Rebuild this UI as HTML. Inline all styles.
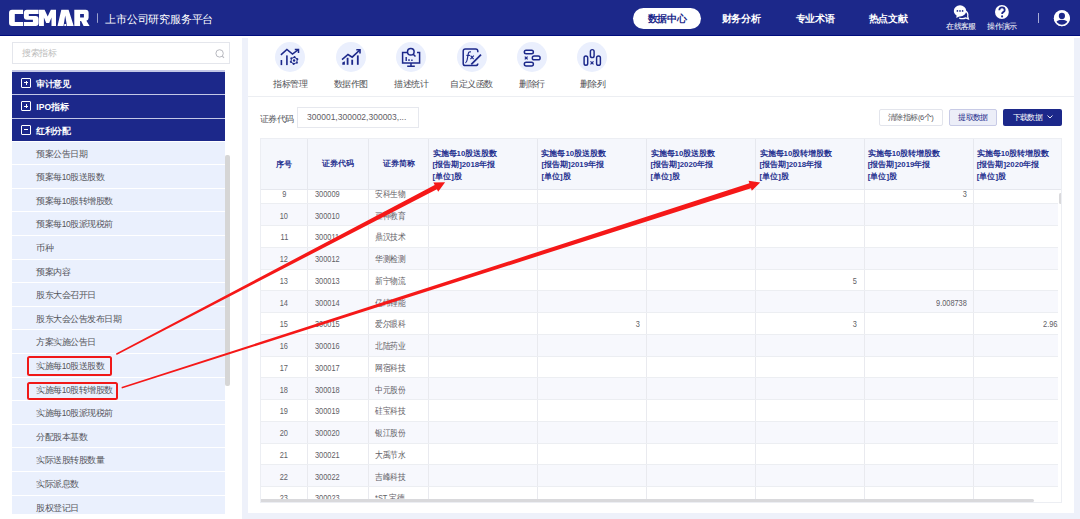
<!DOCTYPE html>
<html><head><meta charset="utf-8">
<style>
*{margin:0;padding:0;box-sizing:border-box}
html,body{width:1080px;height:519px;overflow:hidden;background:#fff;font-family:"Liberation Sans",sans-serif;position:relative}

.abs{position:absolute}
#hdr{left:0;top:0;width:1080px;height:36px;background:#1c288a;border-bottom:1px solid #000c7d}
.nav{position:absolute;top:8px;height:21px;line-height:21px;font-size:10px;letter-spacing:-0.3px;font-weight:bold;color:#fff;text-align:center;white-space:nowrap}
.nav.on{background:#fff;color:#1c288a;border-radius:11px}
.hico-t{position:absolute;top:22px;font-size:7.5px;letter-spacing:-0.6px;color:#fff;white-space:nowrap;width:40px;text-align:center}
.strip{position:absolute;background:#eef1fa}
#search{left:12px;top:42px;width:218px;height:22px;border:1px solid #e4e6ec;background:#fff}
#search span{position:absolute;left:9px;top:-0.5px;line-height:21px;font-size:8.5px;letter-spacing:-0.5px;color:#bdbdbd}
.mh{position:absolute;left:12px;width:213px;height:22.4px;background:#1c288a;color:#fff;font-size:8.5px;letter-spacing:-0.5px;font-weight:bold;line-height:22px;padding-top:1.2px;padding-left:24.2px;white-space:nowrap}
.mh i{position:absolute;left:9px;top:6px;width:10px;height:10px;border:1px solid #fff;border-radius:1px}
.mh i:before{content:"";position:absolute;left:2px;top:3.5px;width:4px;height:1px;background:#fff}
.mh i.p:after{content:"";position:absolute;left:3.5px;top:2px;width:1px;height:4px;background:#fff}
#sub{position:absolute;left:12px;top:141.6px;width:213px;height:372px;overflow:hidden}
.si{height:23.6px;background:#eaf0fd;border-bottom:1px solid #fff;font-size:8.5px;letter-spacing:-0.5px;color:#55565c;line-height:22.6px;padding-top:1px;padding-left:24.2px;white-space:nowrap}

#panel{left:248px;top:38px;width:826px;height:475px;background:#fff}
.tb{position:absolute;top:42px;width:30px;height:30px;border-radius:50%;background:#eaeffd}
.tb svg{position:absolute;left:0;top:0}
.tbl{position:absolute;top:78px;width:70px;text-align:center;font-size:8.5px;letter-spacing:-0.5px;color:#505156;white-space:nowrap;line-height:12px}
#sep{left:248px;top:96px;width:826px;height:1px;background:#eceef2}
.btn{position:absolute;top:108.5px;height:17px;line-height:15px;font-size:7.5px;letter-spacing:-0.7px;text-align:center;border-radius:2px;white-space:nowrap}
#tbl{left:260px;top:138px;width:802px;height:365px;border:1px solid #eceef3;border-top:none;overflow:hidden}
#thead{position:absolute;left:0;top:0;width:802px;height:51.5px;background:#f5f7fc;border-top:1px solid #eceef3;border-bottom:1px solid #e6e8ee;z-index:2}
.th{position:absolute;top:0;height:50.5px;border-right:1px solid #e6e8ee;font-size:7.8px;font-weight:bold;color:#25308f;white-space:nowrap}
.th.s{line-height:50px;padding-top:1.4px;text-align:center}
.th.m{padding:8.5px 0 0 3.2px;line-height:11.75px}
#tbody{position:absolute;left:0;top:51.5px;width:797.4px;height:309.8px;overflow:hidden}
#rows{position:absolute;left:0;top:-7px;width:900px}
.tr{position:relative;height:21.75px;border-bottom:1px solid #eceef2;background:#fff}
.tr.e{background:#f7f8fd}
.td{position:absolute;top:0;height:20.75px;line-height:20.75px;padding-top:1.4px;border-right:1px solid #e9eaef;font-size:8.6px;color:#5f6066;white-space:nowrap;overflow:hidden}
.c0{left:0;width:47.2px;text-align:center}
.c1{left:47.2px;width:61.1px;padding-left:6.8px}
.c2{left:108.3px;width:60.1px;padding-left:6.2px}
.c3{left:168.4px;width:108.9px;text-align:right;padding-right:7px}
.c4{left:277.3px;width:109.1px;text-align:right;padding-right:7px}
.c5{left:386.4px;width:109px;text-align:right;padding-right:7px}
.c6{left:495.4px;width:108.2px;text-align:right;padding-right:7px}
.c7{left:603.6px;width:109px;text-align:right;padding-right:6px}
.c8{left:712.6px;width:109px;text-align:right;padding-right:7.6px}
#hsb{position:absolute;left:0;top:360.9px;width:802px;height:3.6px;background:#fff}
#hsb i{position:absolute;left:0;top:0;width:773px;height:3.6px;background:#d9d9dc;border-radius:0 2px 2px 0}
#vsb{position:absolute;left:797.4px;top:51.5px;width:4.6px;height:310px;background:#fff}
#vsb i{position:absolute;left:0.8px;top:3px;width:3.3px;height:11.5px;background:#d9d9dc;border-radius:2px}

.tL,.tR,.tC{display:inline-block;transform:scaleX(0.86)}
.tL{transform-origin:0 50%}.tR{transform-origin:100% 50%}.tC{transform-origin:50% 50%}
</style></head><body>
<div id="hdr" class="abs">
  <svg class="abs" style="left:0;top:0" width="230" height="36">
    <path fill="#fff" fill-rule="evenodd" d="M23.1 9.8 L12.05 9.8 Q9.05 9.8 9.05 12.8 L9.05 22.9 Q9.05 25.9 12.05 25.9 L23.1 25.9 L23.1 22.05 L14.8 22.05 L14.8 13.9 L23.1 13.9 Z
M26.9 9.8 L38.6 9.8 L38.6 13.9 L28.8 13.9 L28.8 15.9 L35.6 15.9 Q38.6 15.9 38.6 18.9 L38.6 22.9 Q38.6 25.9 35.6 25.9 L23.9 25.9 L23.9 22.05 L32.9 22.05 L32.9 19.8 L26.9 19.8 Q23.9 19.8 23.9 16.8 L23.9 12.8 Q23.9 9.8 26.9 9.8 Z
M39 25.9 L39 9.8 L44.6 9.8 L47.7 16.6 L50.8 9.8 L56 9.8 L56 25.9 L51.5 25.9 L51.5 17.6 L49.2 23 L46.2 23 L43.9 17.6 L43.9 25.9 Z
M57.5 25.9 L61.3 9.8 L68.6 9.8 L73.7 25.9 L67 25.9 L65.2 15.4 L63.5 25.9 Z M64.4 24.1 L66.1 24.1 L66.3 25.9 L64.2 25.9 Z
M74.3 25.9 L74.3 9.8 L85.6 9.8 Q88.6 9.8 88.6 12.8 L88.6 17.8 Q88.6 20.2 86.4 20.8 L89.6 25.9 L83.6 25.9 L81.1 20.9 L80.1 20.9 L80.1 25.9 Z M80.1 14 L83.9 14 L83.9 17.6 L80.1 17.6 Z"/>
    <rect x="97" y="13.3" width="1" height="9.5" fill="#9aa0cc"/>
  </svg>
  <div class="abs" style="left:105.3px;top:11.6px;font-size:11.2px;line-height:14px;color:#fff;white-space:nowrap;letter-spacing:-0.2px">上市公司研究服务平台</div>
  <div class="nav on" style="left:633px;width:68px">数据中心</div>
  <div class="nav" style="left:711px;width:60px">财务分析</div>
  <div class="nav" style="left:785px;width:60px">专业术语</div>
  <div class="nav" style="left:858px;width:60px">热点文献</div>
<svg class="abs" style="left:945px;top:3px" width="80" height="20">
 <path d="M20 7.6 Q23.6 9.6 22.7 13.4 L23.4 15.9 L20.7 14.9 Q18 16.4 14.2 15.2" stroke="#fff" stroke-width="1.25" fill="none"/>
 <ellipse cx="15" cy="7.9" rx="6.2" ry="5.6" fill="#fff"/><path d="M11.6 12 L11.4 15 L15 13 Z" fill="#fff"/>
 <circle cx="12.4" cy="7.9" r="0.85" fill="#1c288a"/><circle cx="15" cy="7.9" r="0.85" fill="#1c288a"/><circle cx="17.6" cy="7.9" r="0.85" fill="#1c288a"/>
 <circle cx="56.9" cy="9" r="6.9" fill="#fff"/>
 <path d="M54.3 7.3 Q54.3 4.4 57 4.4 Q59.7 4.4 59.7 6.9 Q59.7 8.3 58.2 9.1 Q57.1 9.7 57.1 10.9" stroke="#1c288a" stroke-width="1.8" fill="none"/>
 <circle cx="57.1" cy="13.4" r="1.05" fill="#1c288a"/>
</svg>
<div class="hico-t" style="left:941px">在线客服</div>
<div class="hico-t" style="left:982px">操作演示</div>
<div class="abs" style="left:1037.5px;top:13px;width:1px;height:10px;background:#a7acd6"></div>
<svg class="abs" style="left:1052px;top:9px" width="20" height="20">
 <circle cx="9.9" cy="9.25" r="8.1" fill="#fff"/>
 <circle cx="9.9" cy="6.9" r="3.1" fill="#1c288a"/>
 <path d="M3.6 14.2 Q4.6 10.7 9.9 10.7 Q15.2 10.7 16.2 14.2 Q13.6 16.3 9.9 16.3 Q6.2 16.3 3.6 14.2 Z" fill="#1c288a"/>
 <circle cx="9.9" cy="9.25" r="7.2" fill="none" stroke="#fff" stroke-width="1.5"/>
</svg>

</div>
<div class="strip" style="left:242px;top:38px;width:6px;height:481px"></div>
<div class="strip" style="left:242px;top:513px;width:838px;height:6px"></div>
<div class="strip" style="left:1074px;top:38px;width:6px;height:481px"></div>


<div id="panel" class="abs"></div>
<div id="sep" class="abs"></div>
<div class="tb" style="left:275.2px"><svg width="30" height="30"><path d="M5.9 12.9 L11.9 7.4 L17.5 12 L23.3 7.6" stroke="#1c288a" stroke-width="1.5" fill="none" stroke-linejoin="miter"/><path d="M19.8 7.4 L23.5 7.4 L23.5 11.1" stroke="#1c288a" stroke-width="1.5" fill="none"/>
<rect x="5.6" y="18" width="1.6" height="5.1" fill="#1c288a"/><rect x="11.1" y="13.4" width="1.6" height="9.7" fill="#1c288a"/>
<polygon points="19.10,14.00 20.26,14.15 20.80,15.56 21.50,16.10 23.00,16.25 23.45,17.34 22.50,18.50 22.38,19.38 23.00,20.75 22.28,21.68 20.80,21.44 19.98,21.78 19.10,23.00 17.94,22.85 17.40,21.44 16.70,20.90 15.20,20.75 14.75,19.66 15.70,18.50 15.82,17.62 15.20,16.25 15.92,15.32 17.40,15.56 18.22,15.22" fill="#1c288a"/><circle cx="19.1" cy="18.5" r="2.5" fill="#eaeffd"/><circle cx="19.1" cy="18.5" r="1.2" fill="#1c288a"/></svg></div>
<div class="tb" style="left:335.6px"><svg width="30" height="30"><path d="M6 17.6 L12 12.5 L16.2 15.2 L23.8 8" stroke="#1c288a" stroke-width="1.6" fill="none"/><path d="M20.3 7.8 L24 7.8 L24 11.5" stroke="#1c288a" stroke-width="1.6" fill="none"/>
<path d="M6.3 22.8 L6.3 20.6 L8.9 19.2 L8.9 22.8 Z" fill="#1c288a"/><rect x="10.7" y="15.8" width="1.8" height="7" fill="#1c288a"/><rect x="15.3" y="17.7" width="1.8" height="5.1" fill="#1c288a"/><rect x="20.9" y="13.4" width="1.8" height="9.4" fill="#1c288a"/></svg></div>
<div class="tb" style="left:396px"><svg width="30" height="30"><path d="M11 10.5 L6.6 10.5 L6.6 21 L23.6 21 L23.6 10.5 L21 10.5" stroke="#1c288a" stroke-width="1.5" fill="none"/><path d="M15 21 L15 24 M11.2 24.2 L18.8 24.2" stroke="#1c288a" stroke-width="1.5" fill="none"/>
<circle cx="14.8" cy="9.8" r="3.3" stroke="#1c288a" stroke-width="1.5" fill="none"/><path d="M17.2 12.2 L19.5 14.6" stroke="#1c288a" stroke-width="1.5"/>
<rect x="9.5" y="15" width="1.4" height="4" fill="#1c288a"/><rect x="12.3" y="17.2" width="1.4" height="1.8" fill="#1c288a"/><rect x="15.2" y="17.5" width="1.4" height="1.5" fill="#1c288a"/></svg></div>
<div class="tb" style="left:456.5px"><svg width="30" height="30"><path d="M20.8 21.4 Q20.8 23.6 18.6 23.6 L8.4 23.6 Q6.2 23.6 6.2 21.4 L6.2 9.1 Q6.2 6.9 8.4 6.9 L18.6 6.9 Q20.8 6.9 20.8 9.1 L20.8 10.2" stroke="#1c288a" stroke-width="1.5" fill="none"/>
<path d="M8.3 20.6 Q9.6 20.8 10.1 18 L11.3 11.6 Q11.8 9.4 13.9 9.9" stroke="#1c288a" stroke-width="1.2" fill="none"/><path d="M9.4 13.4 L13 13.4" stroke="#1c288a" stroke-width="1.1"/>
<path d="M13.6 13.6 L16.6 17.2 M16.8 13.6 L13.4 17.2" stroke="#1c288a" stroke-width="1.1"/><path d="M14.3 22.3 L24 12.6" stroke="#1c288a" stroke-width="1.7"/></svg></div>
<div class="tb" style="left:517px"><svg width="30" height="30"><rect x="7.3" y="8.2" width="9.1" height="3.6" rx="1.8" stroke="#1c288a" stroke-width="1.45" fill="none"/><rect x="15.3" y="14" width="7.8" height="3.8" rx="1.9" stroke="#1c288a" stroke-width="1.45" fill="none"/><rect x="7.3" y="20.2" width="9.1" height="3.8" rx="1.9" stroke="#1c288a" stroke-width="1.45" fill="none"/>
<path d="M7.8 14.6 L10.6 17.4 M10.6 14.6 L7.8 17.4" stroke="#1c288a" stroke-width="1.2"/></svg></div>
<div class="tb" style="left:577.4px"><svg width="30" height="30"><rect x="7.1" y="13.9" width="3.6" height="9.4" rx="1.8" stroke="#1c288a" stroke-width="1.45" fill="none"/><rect x="13.4" y="7.6" width="3.7" height="8" rx="1.85" stroke="#1c288a" stroke-width="1.45" fill="none"/><rect x="19.6" y="13.9" width="3.8" height="9.4" rx="1.9" stroke="#1c288a" stroke-width="1.45" fill="none"/>
<path d="M13.5 19.3 L16.5 22.3 M16.5 19.3 L13.5 22.3" stroke="#1c288a" stroke-width="1.2"/></svg></div>
<div class="tbl" style="left:255.2px">指标管理</div>
<div class="tbl" style="left:315.6px">数据作图</div>
<div class="tbl" style="left:376px">描述统计</div>
<div class="tbl" style="left:436.5px">自定义函数</div>
<div class="tbl" style="left:497px">删除行</div>
<div class="tbl" style="left:557.4px">删除列</div>
<div class="abs" style="left:260px;top:112.5px;font-size:8.5px;letter-spacing:-0.6px;color:#55565c;line-height:12px;white-space:nowrap">证券代码</div>
<div class="abs" style="left:296.5px;top:106.5px;width:122.5px;height:21px;border:1px solid #e6e8ee;font-size:8.5px;color:#5f6066;line-height:19px;padding-left:9.5px;white-space:nowrap">300001,300002,300003,...</div>
<div class="btn" style="left:878.5px;width:64px;border:1px solid #e3e5ec;color:#55565c;background:#fff;letter-spacing:-0.45px">清除指标(6个)</div>
<div class="btn" style="left:949px;width:48.2px;border:1px solid #c8cbe6;color:#1c288a;background:#eceef8">提取数据</div>
<div class="btn" style="left:1003.3px;width:58.5px;background:#1c288a;color:#fff;line-height:17px;text-align:left;padding-left:9.5px">下载数据<svg style="position:absolute;left:44px;top:6px" width="6" height="4"><path d="M0.5 0.5 L3 3 L5.5 0.5" stroke="#fff" stroke-width="0.9" fill="none"/></svg></div>
<div id="tbl" class="abs">
 <div id="tbody"><div id="rows">
<div class="tr"><div class="td c0"><span class="tC">9</span></div><div class="td c1"><span class="tL">300009</span></div><div class="td c2"><span class="tL">安科生物</span></div><div class="td c3"></div><div class="td c4"></div><div class="td c5"></div><div class="td c6"></div><div class="td c7"><span class="tR">3</span></div><div class="td c8"></div></div>
<div class="tr e"><div class="td c0"><span class="tC">10</span></div><div class="td c1"><span class="tL">300010</span></div><div class="td c2"><span class="tL">豆神教育</span></div><div class="td c3"></div><div class="td c4"></div><div class="td c5"></div><div class="td c6"></div><div class="td c7"></div><div class="td c8"></div></div>
<div class="tr"><div class="td c0"><span class="tC">11</span></div><div class="td c1"><span class="tL">300011</span></div><div class="td c2"><span class="tL">鼎汉技术</span></div><div class="td c3"></div><div class="td c4"></div><div class="td c5"></div><div class="td c6"></div><div class="td c7"></div><div class="td c8"></div></div>
<div class="tr e"><div class="td c0"><span class="tC">12</span></div><div class="td c1"><span class="tL">300012</span></div><div class="td c2"><span class="tL">华测检测</span></div><div class="td c3"></div><div class="td c4"></div><div class="td c5"></div><div class="td c6"></div><div class="td c7"></div><div class="td c8"></div></div>
<div class="tr"><div class="td c0"><span class="tC">13</span></div><div class="td c1"><span class="tL">300013</span></div><div class="td c2"><span class="tL">新宁物流</span></div><div class="td c3"></div><div class="td c4"></div><div class="td c5"></div><div class="td c6"><span class="tR">5</span></div><div class="td c7"></div><div class="td c8"></div></div>
<div class="tr e"><div class="td c0"><span class="tC">14</span></div><div class="td c1"><span class="tL">300014</span></div><div class="td c2"><span class="tL">亿纬锂能</span></div><div class="td c3"></div><div class="td c4"></div><div class="td c5"></div><div class="td c6"></div><div class="td c7"><span class="tR">9.008738</span></div><div class="td c8"></div></div>
<div class="tr"><div class="td c0"><span class="tC">15</span></div><div class="td c1"><span class="tL">300015</span></div><div class="td c2"><span class="tL">爱尔眼科</span></div><div class="td c3"></div><div class="td c4"><span class="tR">3</span></div><div class="td c5"></div><div class="td c6"><span class="tR">3</span></div><div class="td c7"></div><div class="td c8"><span class="tR">2.962963</span></div></div>
<div class="tr e"><div class="td c0"><span class="tC">16</span></div><div class="td c1"><span class="tL">300016</span></div><div class="td c2"><span class="tL">北陆药业</span></div><div class="td c3"></div><div class="td c4"></div><div class="td c5"></div><div class="td c6"></div><div class="td c7"></div><div class="td c8"></div></div>
<div class="tr"><div class="td c0"><span class="tC">17</span></div><div class="td c1"><span class="tL">300017</span></div><div class="td c2"><span class="tL">网宿科技</span></div><div class="td c3"></div><div class="td c4"></div><div class="td c5"></div><div class="td c6"></div><div class="td c7"></div><div class="td c8"></div></div>
<div class="tr e"><div class="td c0"><span class="tC">18</span></div><div class="td c1"><span class="tL">300018</span></div><div class="td c2"><span class="tL">中元股份</span></div><div class="td c3"></div><div class="td c4"></div><div class="td c5"></div><div class="td c6"></div><div class="td c7"></div><div class="td c8"></div></div>
<div class="tr"><div class="td c0"><span class="tC">19</span></div><div class="td c1"><span class="tL">300019</span></div><div class="td c2"><span class="tL">硅宝科技</span></div><div class="td c3"></div><div class="td c4"></div><div class="td c5"></div><div class="td c6"></div><div class="td c7"></div><div class="td c8"></div></div>
<div class="tr e"><div class="td c0"><span class="tC">20</span></div><div class="td c1"><span class="tL">300020</span></div><div class="td c2"><span class="tL">银江股份</span></div><div class="td c3"></div><div class="td c4"></div><div class="td c5"></div><div class="td c6"></div><div class="td c7"></div><div class="td c8"></div></div>
<div class="tr"><div class="td c0"><span class="tC">21</span></div><div class="td c1"><span class="tL">300021</span></div><div class="td c2"><span class="tL">大禹节水</span></div><div class="td c3"></div><div class="td c4"></div><div class="td c5"></div><div class="td c6"></div><div class="td c7"></div><div class="td c8"></div></div>
<div class="tr e"><div class="td c0"><span class="tC">22</span></div><div class="td c1"><span class="tL">300022</span></div><div class="td c2"><span class="tL">吉峰科技</span></div><div class="td c3"></div><div class="td c4"></div><div class="td c5"></div><div class="td c6"></div><div class="td c7"></div><div class="td c8"></div></div>
<div class="tr"><div class="td c0"><span class="tC">23</span></div><div class="td c1"><span class="tL">300023</span></div><div class="td c2"><span class="tL">*ST 宝德</span></div><div class="td c3"></div><div class="td c4"></div><div class="td c5"></div><div class="td c6"></div><div class="td c7"></div><div class="td c8"></div></div>
 </div></div>
 <div id="thead">
  <div class="th s c0">序号</div>
  <div class="th s c1" style="padding:0;text-align:center">证券代码</div>
  <div class="th s c2" style="padding:0;text-align:center">证券简称</div>
  <div class="th m c3" style="text-align:left">实施每10股送股数<br>[报告期]2018年报<br>[单位]股</div>
  <div class="th m c4" style="text-align:left">实施每10股送股数<br>[报告期]2019年报<br>[单位]股</div>
  <div class="th m c5" style="text-align:left">实施每10股送股数<br>[报告期]2020年报<br>[单位]股</div>
  <div class="th m c6" style="text-align:left">实施每10股转增股数<br>[报告期]2018年报<br>[单位]股</div>
  <div class="th m c7" style="text-align:left">实施每10股转增股数<br>[报告期]2019年报<br>[单位]股</div>
  <div class="th m c8" style="text-align:left">实施每10股转增股数<br>[报告期]2020年报<br>[单位]股</div>
 </div>
 <div id="vsb"><i></i></div>
 <div id="hsb"><i></i></div>
</div>

<div id="search" class="abs"><span>搜索指标</span><svg style="position:absolute;left:199.5px;top:3.6px" width="14" height="14"><circle cx="6.6" cy="6.4" r="3.7" stroke="#b8b9c0" stroke-width="1" fill="none"/><path d="M9.3 9.1 L11 10.8" stroke="#b8b9c0" stroke-width="1.1"/></svg></div>
<div class="abs" style="left:12px;top:70px;width:213px;height:71px;background:#c3c7e6"></div>
<div class="mh" style="top:71.6px"><i class="p"></i>审计意见</div>
<div class="mh" style="top:95.2px"><i class="p"></i><span style="letter-spacing:0.1px">IPO</span>指标</div>
<div class="mh" style="top:118.8px"><i></i>红利分配</div>
<div id="sub">
<div class="si">预案公告日期</div>
<div class="si">预案每10股送股数</div>
<div class="si">预案每10股转增股数</div>
<div class="si">预案每10股派现税前</div>
<div class="si">币种</div>
<div class="si">预案内容</div>
<div class="si">股东大会召开日</div>
<div class="si">股东大会公告发布日期</div>
<div class="si">方案实施公告日</div>
<div class="si">实施每10股送股数</div>
<div class="si">实施每10股转增股数</div>
<div class="si">实施每10股派现税前</div>
<div class="si">分配股本基数</div>
<div class="si">实际送股转股数量</div>
<div class="si">实际派息数</div>
<div class="si">股权登记日</div>
</div>
<div class="abs" style="left:225.3px;top:155px;width:4.3px;height:231px;background:#d6d6d6;border-radius:2px"></div>


<div class="abs" style="left:26.9px;top:356.2px;width:84.8px;height:19.7px;border:2px solid #f01818;border-radius:2.5px"></div>
<div class="abs" style="left:26.9px;top:381.6px;width:91px;height:18.5px;border:2px solid #f01818;border-radius:2.5px"></div>
<svg class="abs" style="left:0;top:0;z-index:10" width="1080" height="519">
 <polygon points="116.6,354.9 436.9,189.2 438.2,191.7 445.1,182.2 433.4,182.4 434.7,184.9 116.0,353.5" fill="#f51818"/><polygon points="121.9,388.5 751.0,188.3 751.8,190.8 760.2,182.6 748.6,180.8 749.4,183.3 121.5,387.1" fill="#f51818"/>
</svg>
</body></html>
